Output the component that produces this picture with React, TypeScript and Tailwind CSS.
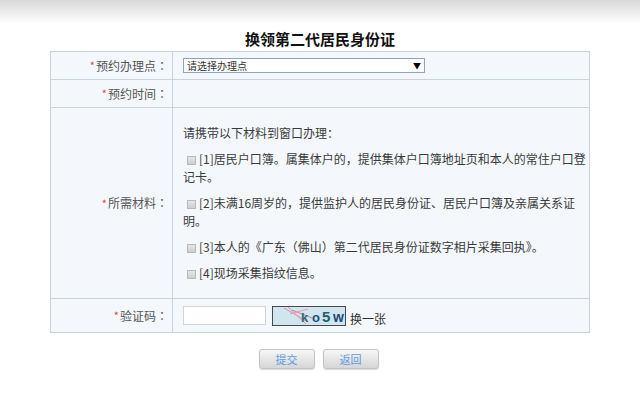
const font = { fontFamily: '"Microsoft YaHei", "Noto Sans CJK SC", "Liberation Sans", sans-serif' };
const colonFont = { fontFamily: '"Noto Sans CJK TC", "Noto Sans CJK SC", sans-serif' };

function Label({ text }: { text: string }) {
  return (
    <div className="flex items-center justify-end pr-[4px] border-r border-[#c9d3de] text-[12px] text-[#555]">
      <span className="text-[#e8483f] text-[11px] mr-[1px]">*</span>
      {text}
      <span style={colonFont}>：</span>
    </div>
  );
}

function Check() {
  return (
    <span className="inline-block align-[-1px] w-[9px] h-[9px] ml-[4px] mr-[3px] border border-[#b9b9b9] bg-gradient-to-b from-[#e6e6e6] to-[#cfcfcf]" />
  );
}

function Captcha() {
  return (
    <svg width="74" height="20" viewBox="0 0 74 20" className="block">
      <rect x="0.5" y="0.5" width="73" height="19" fill="#cfe5f0" stroke="#4a4a4a" />
      <line x1="12" y1="2" x2="36" y2="16" stroke="#e08aa8" strokeWidth="1" />
      <line x1="16" y1="1" x2="34" y2="18" stroke="#e596b2" strokeWidth="1" />
      <line x1="20" y1="4" x2="40" y2="12" stroke="#d97a9c" strokeWidth="1" />
      <line x1="18" y1="8" x2="36" y2="3" stroke="#e8a0b8" strokeWidth="1" />
      <text x="29" y="16" fontSize="13" fontWeight="bold" fill="#2c6c74" fontFamily="Liberation Sans, sans-serif">k</text>
      <text x="40" y="16" fontSize="13" fontWeight="bold" fill="#234f6b" fontFamily="Liberation Sans, sans-serif">o</text>
      <text x="50" y="16" fontSize="15" fontWeight="bold" fill="#1e5f6a" fontFamily="Liberation Sans, sans-serif">5</text>
      <text x="61" y="16" fontSize="14" fontWeight="bold" fill="#1d4a78" fontFamily="Liberation Sans, sans-serif">w</text>
    </svg>
  );
}

function Btn({ text }: { text: string }) {
  return (
    <button className="w-[56px] h-[20px] rounded-[3px] border border-[#c4c4c4] bg-gradient-to-b from-[#f7f7f7] to-[#d6d6d6] shadow-[0_1px_1px_rgba(0,0,0,0.15)] text-[11px] leading-[18px] text-[#5a9ae0]">
      {text}
    </button>
  );
}

export default function App() {
  return (
    <div className="w-[640px] h-[395px] bg-white overflow-hidden" style={font}>
      <div className="h-[24px] bg-gradient-to-b from-[#d9d9d9] to-white" />
      <div className="h-[27px] flex items-center justify-center pt-[4px] text-[15px] font-bold text-[#111]">
        换领第二代居民身份证
      </div>
      <div className="w-[540px] mx-auto border border-[#c9d3de] bg-[#f4f8fc]">
        <div className="grid grid-cols-[122px_1fr] h-[28px] border-b border-[#c9d3de]">
          <Label text="预约办理点" />
          <div className="flex items-center pl-[10px]">
            <div className="w-[242px] h-[15px] border border-[#8aa4c4] bg-white flex items-center justify-between pl-[3px] pr-[3px] text-[10px] text-[#333]">
              <span>请选择办理点</span>
              <span className="text-[8px] text-black">▼</span>
            </div>
          </div>
        </div>
        <div className="grid grid-cols-[122px_1fr] h-[28px] border-b border-[#c9d3de]">
          <Label text="预约时间" />
          <div />
        </div>
        <div className="grid grid-cols-[122px_1fr] h-[191px] border-b border-[#c9d3de]">
          <Label text="所需材料" />
          <div className="pl-[10px] pt-[16px] text-[12px] leading-[18px] text-[#3a3a3a] flex flex-col gap-[8px]">
            <p>请携带以下材料到窗口办理：</p>
            <p>
              <Check />[1]居民户口簿。属集体户的，提供集体户口簿地址页和本人的常住户口登
              <br />
              记卡。
            </p>
            <p>
              <Check />[2]未满16周岁的，提供监护人的居民身份证、居民户口簿及亲属关系证
              <br />
              明。
            </p>
            <p>
              <Check />[3]本人的《广东（佛山）第二代居民身份证数字相片采集回执》。
            </p>
            <p>
              <Check />[4]现场采集指纹信息。
            </p>
          </div>
        </div>
        <div className="grid grid-cols-[122px_1fr] h-[33px]">
          <Label text="验证码" />
          <div className="flex items-center pl-[10px]">
            <div className="w-[83px] h-[19px] border border-[#d4d4d4] bg-white" />
            <div className="ml-[6px]">
              <Captcha />
            </div>
            <span className="ml-[4px] mt-[6px] text-[12px] text-[#333]">换一张</span>
          </div>
        </div>
      </div>
      <div className="flex justify-center gap-[8px] mt-[16px] pr-[3px]">
        <Btn text="提交" />
        <Btn text="返回" />
      </div>
    </div>
  );
}
